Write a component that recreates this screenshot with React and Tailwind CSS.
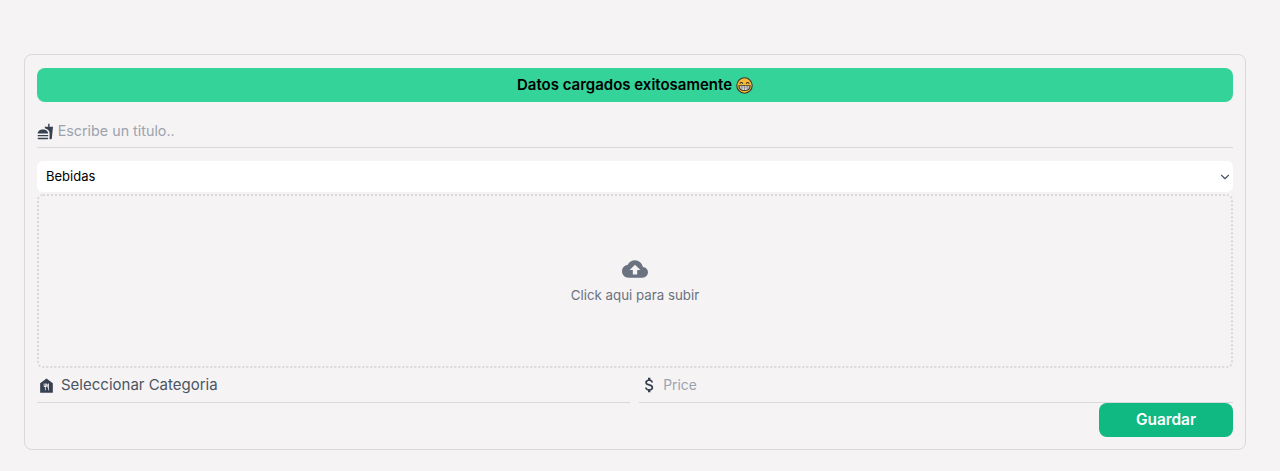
import { MdFastfood, MdCloudUpload, MdFoodBank, MdAttachMoney } from 'react-icons/md';
import { ChevronDown } from 'lucide-react';

const font = "font-['Inter','Noto_Sans',sans-serif]";

function GrinEmoji() {
  return (
    <svg viewBox="0 0 32 32" className="h-[17px] w-[17px]" role="img" aria-label="😁">
      <circle cx="16" cy="16" r="14.5" fill="#f5b93a" stroke="#3a3226" strokeWidth="2" />
      <path d="M7 12.5q3-4 6 0M19 12.5q3-4 6 0" fill="none" stroke="#3a3226" strokeWidth="2" />
      <path d="M5.5 16.5h21q0 9-10.500 9t-10.500-9z" fill="#f4f4f4" stroke="#3a3226" strokeWidth="2" />
      <path d="M6.500 20.500h19M11 17v7M16 17v8M21 17v7" stroke="#6b6b6b" strokeWidth="1.200" />
    </svg>
  );
}

export default function App() {
  return (
    <div className={`h-[471px] w-full overflow-hidden bg-[#f5f3f4] px-6 pt-[54px] ${font}`}>
      <div className="flex h-[396px] w-[1222px] flex-col rounded-lg border border-[#d9d9dc] px-3 pt-[13px]">
        <div className="flex h-[34px] items-center justify-center gap-1 rounded-lg bg-[#34d399] text-[15px] font-semibold text-black">
          <span>Datos cargados exitosamente</span>
          <GrinEmoji />
        </div>

        <div className="mt-[11px] flex h-[35px] items-center gap-1 border-b border-[#d9d9dc] pt-0.5">
          <MdFastfood className="h-[17px] w-[17px] text-[#374151]" />
          <input
            className="w-full bg-transparent text-[14.3px] text-gray-700 outline-none placeholder:text-[#9ca3af]"
            placeholder="Escribe un titulo.."
          />
        </div>

        <div className="mt-[13px] flex h-[31px] items-center justify-between rounded-md bg-white pl-[9px] pr-px text-[13px] text-black">
          <span>Bebidas</span>
          <ChevronDown className="h-3.5 w-3.5 text-[#4b5563]" strokeWidth={2} />
        </div>

        <div className="mt-[2px] flex h-[174px] flex-col items-center justify-center rounded-md border-2 border-dotted border-[#d9d9dc] pt-0.5">
          <MdCloudUpload className="-mt-0.5 h-[26px] w-[26px] text-[#6b7280]" />
          <p className="mt-1 text-[13.3px] text-[#6b7280]">Click aqui para subir</p>
        </div>

        <div className="flex h-[35px] gap-[9px]">
          <div className="flex flex-1 items-center gap-[5px] border-b border-[#d9d9dc]">
            <MdFoodBank className="h-[19px] w-[19px] text-[#374151]" />
            <span className="text-[15px] text-[#4b5563]">Seleccionar Categoria</span>
          </div>
          <div className="flex flex-1 items-center gap-[4px] border-b border-[#d9d9dc] pl-px">
            <MdAttachMoney className="h-5 w-5 text-[#374151]" />
            <input
              className="w-full bg-transparent text-[13.8px] text-gray-700 outline-none placeholder:text-[#9ca3af]"
              placeholder="Price"
            />
          </div>
        </div>

        <div className="flex justify-end">
          <button className="h-[34px] w-[134px] rounded-lg bg-[#10b981] text-[15.4px] font-semibold text-white">
            Guardar
          </button>
        </div>
      </div>
    </div>
  );
}
